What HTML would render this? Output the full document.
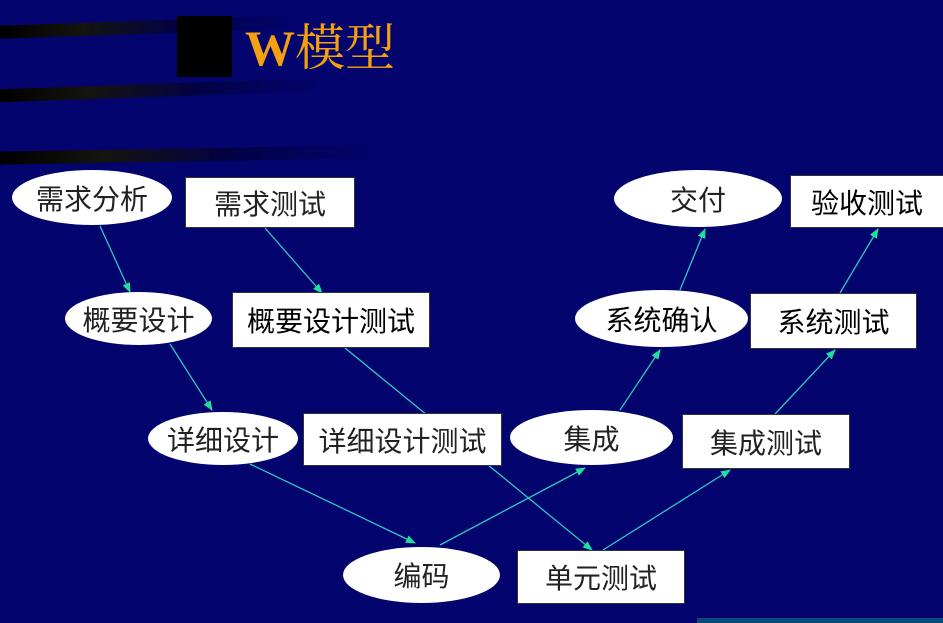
<!DOCTYPE html><html><head><meta charset="utf-8"><style>
body{margin:0;width:943px;height:623px;overflow:hidden;background:#03046e;position:relative;font-family:"Liberation Sans","Noto Sans CJK SC",sans-serif}
.s{position:absolute;left:0;height:13px;background:linear-gradient(90deg,#000 0,#141410 25%,rgba(0,0,40,0.6) 55%,rgba(0,0,80,0) 90%)}
.e,.b{position:absolute;background:#fff;display:flex;align-items:center;justify-content:center;font-size:28px;color:#222;box-sizing:border-box;white-space:nowrap}
.e{border-radius:50%}
.b{border:1px solid #333}
</style></head><body>
<div class="s" style="top:20px;width:330px;transform:skewY(-2deg)"></div>
<div class="s" style="top:83px;width:360px;transform:skewY(-2deg)"></div>
<div class="s" style="top:148px;width:420px;transform:skewY(-1deg)"></div>
<div style="position:absolute;left:177px;top:16px;width:55px;height:61px;background:#000"></div>
<div style="position:absolute;left:245px;top:8px;font-size:50px;color:#f5a010;font-family:'Liberation Serif','Noto Serif CJK SC',serif"><b>W</b>模型</div>
<svg width="943" height="623" style="position:absolute;left:0;top:0">
<defs><marker id="a" markerWidth="10" markerHeight="8" refX="9" refY="4" orient="auto" markerUnits="userSpaceOnUse"><path d="M0,0L10,4L0,8z" fill="#20e0a0"/></marker></defs>
<g stroke="#30c8c0" stroke-width="1.3" fill="none" marker-end="url(#a)">
<line x1="100" y1="226" x2="130" y2="292"/>
<line x1="265" y1="228" x2="322" y2="293"/>
<line x1="170" y1="344" x2="212" y2="410"/>
<line x1="345" y1="348" x2="592" y2="550"/>
<line x1="250" y1="464" x2="415" y2="543"/>
<line x1="440" y1="545" x2="585" y2="468"/>
<line x1="603" y1="550" x2="730" y2="470"/>
<line x1="620" y1="410" x2="660" y2="350"/>
<line x1="775" y1="414" x2="835" y2="350"/>
<line x1="680" y1="290" x2="705" y2="229"/>
<line x1="840" y1="293" x2="878" y2="229"/>
</g></svg>
<div class="e" style="left:12px;top:170px;width:160px;height:55px">需求分析</div>
<div class="b" style="left:185px;top:177px;width:170px;height:51px">需求测试</div>
<div class="e" style="left:65px;top:292px;width:147px;height:53px">概要设计</div>
<div class="b" style="left:232px;top:292px;width:198px;height:56px;color:#000">概要设计测试</div>
<div class="e" style="left:148px;top:412px;width:150px;height:53px">详细设计</div>
<div class="b" style="left:303px;top:413px;width:199px;height:53px">详细设计测试</div>
<div class="e" style="left:343px;top:547px;width:157px;height:56px">编码</div>
<div class="b" style="left:517px;top:550px;width:168px;height:54px">单元测试</div>
<div class="e" style="left:510px;top:410px;width:163px;height:55px">集成</div>
<div class="b" style="left:682px;top:414px;width:168px;height:55px">集成测试</div>
<div class="e" style="left:575px;top:290px;width:173px;height:57px;color:#000">系统确认</div>
<div class="b" style="left:750px;top:293px;width:167px;height:56px;color:#000">系统测试</div>
<div class="e" style="left:614px;top:170px;width:168px;height:57px">交付</div>
<div class="b" style="left:790px;top:175px;width:160px;height:53px;color:#000;justify-content:flex-start;padding-left:20px">验收测试</div>
<div style="position:absolute;left:697px;top:618px;width:246px;height:5px;background:#0a4a78"></div>
</body></html>
